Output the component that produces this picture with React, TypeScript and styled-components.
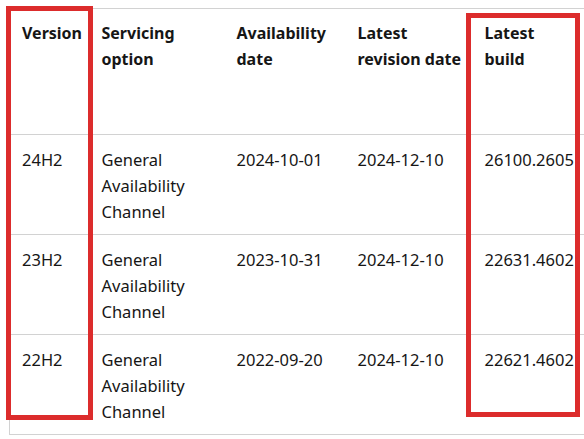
import React from "react";
import styled, { createGlobalStyle } from "styled-components";

const GlobalStyle = createGlobalStyle`
  html, body {
    margin: 0;
    padding: 0;
    background: #ffffff;
    overflow: hidden;
  }
  body {
    font-family: "Noto Sans", "Open Sans", sans-serif;
    color: #161616;
  }
`;

const rows = [
  { version: "24H2", available: "2024-10-01", revision: "2024-12-10", build: "26100.2605" },
  { version: "23H2", available: "2023-10-31", revision: "2024-12-10", build: "22631.4602" },
  { version: "22H2", available: "2022-09-20", revision: "2024-12-10", build: "22621.4602" },
];

const widths = [80, 135, 121, 127, 140];

const App = () => {
  return (
    <>
      <GlobalStyle />
      <Page>
        <Table>
          <colgroup>
            {widths.map((w, i) => (
              <col key={i} style={{ width: w }} />
            ))}
          </colgroup>
          <thead>
            <tr>
              <HeadCell>Version</HeadCell>
              <HeadCell>
                Servicing
                <br />
                option
              </HeadCell>
              <HeadCell>
                Availability
                <br />
                date
              </HeadCell>
              <HeadCell>
                Latest
                <br />
                revision date
              </HeadCell>
              <HeadCell>
                Latest
                <br />
                build
              </HeadCell>
            </tr>
          </thead>
          <tbody>
            {rows.map((r) => (
              <tr key={r.version}>
                <Cell>{r.version}</Cell>
                <Cell>
                  General
                  <br />
                  Availability
                  <br />
                  Channel
                </Cell>
                <Cell>{r.available}</Cell>
                <Cell>{r.revision}</Cell>
                <Cell>{r.build}</Cell>
              </tr>
            ))}
          </tbody>
        </Table>
        <Highlight $left={6} $top={6} $width={87} $height={414} />
        <Highlight $left={466} $top={13} $width={114} $height={404} />
      </Page>
    </>
  );
};

export default App;

const Page = styled.div`
  position: relative;
  width: 584px;
  height: 439px;
  padding: 8px 0 0 9px;
  box-sizing: border-box;
`;

const Table = styled.table`
  border-collapse: collapse;
  table-layout: fixed;
  width: 603px;
  font-size: 16px;
  line-height: 26px;
  border-left: 1px solid #d2d2d2;
`;

const HeadCell = styled.th`
  text-align: left;
  vertical-align: top;
  font-weight: 700;
  padding: 11px 8px 0 12px;
  height: 126px;
  box-sizing: border-box;
  border-top: 1px solid #d2d2d2;
  border-bottom: 1px solid #d2d2d2;
  white-space: nowrap;
`;

const Cell = styled.td`
  vertical-align: top;
  font-weight: 400;
  font-size: 16.5px;
  padding: 12px 8px 9px 12px;
  border-bottom: 1px solid #d2d2d2;
  white-space: nowrap;
`;

const Highlight = styled.div<{ $left: number; $top: number; $width: number; $height: number }>`
  position: absolute;
  left: ${(p) => p.$left}px;
  top: ${(p) => p.$top}px;
  width: ${(p) => p.$width}px;
  height: ${(p) => p.$height}px;
  border: 5px solid #dc2c2c;
  box-sizing: border-box;
  pointer-events: none;
`;
